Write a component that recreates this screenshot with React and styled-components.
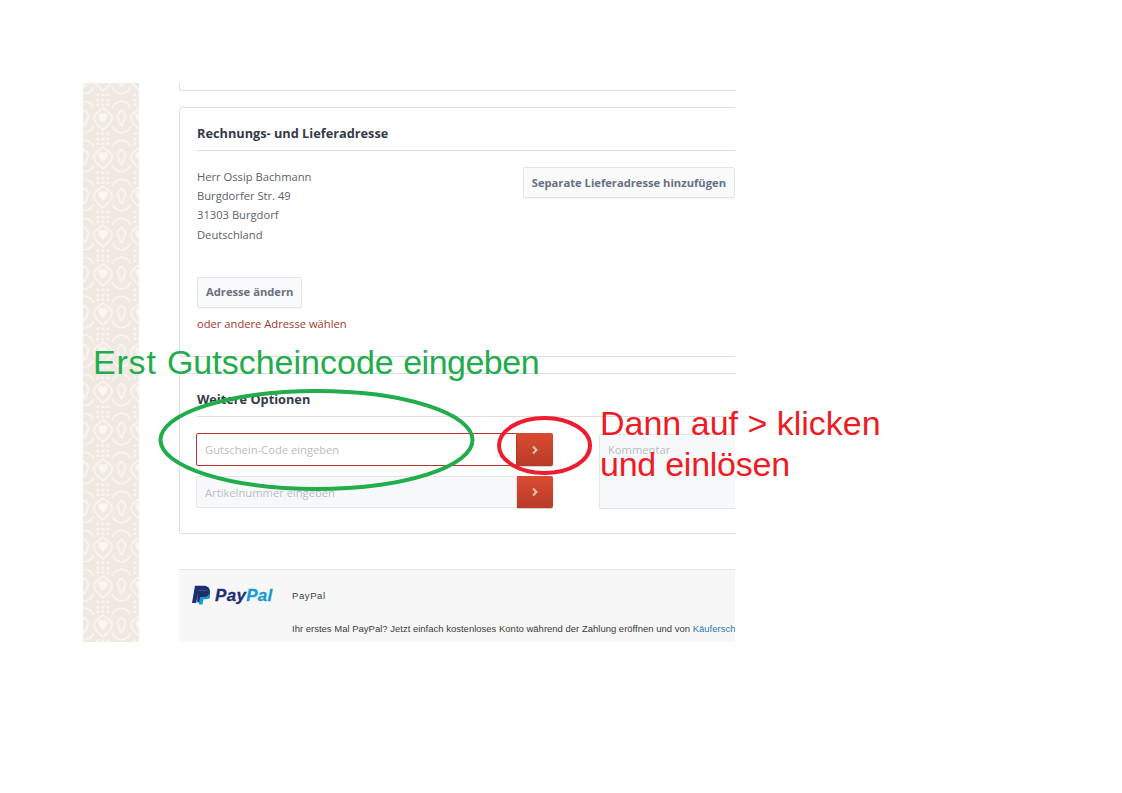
import React from "react";
import styled, { createGlobalStyle } from "styled-components";

const Global = createGlobalStyle`
  html, body { margin: 0; padding: 0; background: #fff; }
  body { font-family: "Open Sans", "Liberation Sans", sans-serif; }
`;

const Page = styled.div`
  position: relative;
  width: 1122px;
  height: 793px;
  padding: 83px 0 0 83px;
  box-sizing: border-box;
  overflow: hidden;
  background: #fff;
`;

const Shot = styled.div`
  display: flex;
  width: 652px;
  height: 559px;
  overflow: hidden;
  background: #fff;
`;

const Stripe = styled.svg`
  flex: 0 0 56px;
  width: 56px;
  height: 559px;
  display: block;
`;

const Main = styled.main`
  flex: 0 0 596px;
  width: 596px;
  padding-left: 40px;
  box-sizing: border-box;
  display: flex;
  flex-direction: column;
  align-items: flex-start;
`;

const CardEnd = styled.div`
  width: 600px;
  height: 8px;
  flex: none;
  border: 1px solid #dcdee0;
  border-top: 0;
  border-radius: 0 0 3px 3px;
  box-sizing: border-box;
`;

const Card = styled.section`
  width: 600px;
  height: ${(p) => p.$h}px;
  margin-top: ${(p) => p.$mt}px;
  flex: none;
  border: 1px solid #dcdee0;
  border-radius: 3px;
  box-sizing: border-box;
  padding: 0 0 0 17px;
`;

const CardTitle = styled.h3`
  margin: 0;
  height: 43px;
  box-sizing: border-box;
  padding-top: 16px;
  width: 560px;
  border-bottom: 1px solid #dcdee0;
  font-size: 12.75px;
  line-height: 18px;
  font-weight: 700;
  color: #343a46;
`;

const AddressRow = styled.div`
  display: flex;
  justify-content: space-between;
  width: 538px;
  padding-top: 16px;
  height: 110px;
  box-sizing: border-box;
`;

const Address = styled.address`
  font-style: normal;
  font-size: 11.2px;
  line-height: 19.2px;
  color: #5b626c;
`;

const GhostButton = styled.button`
  height: 31px;
  padding: 0 8px ${(p) => p.$pb || 1}px;
  margin-top: ${(p) => p.$mt || 0}px;
  box-sizing: border-box;
  background: #f9fafc;
  border: 1px solid #e1e4e8;
  border-radius: 2px;
  box-shadow: 0 1px 1px rgba(0, 0, 0, 0.04);
  font-family: inherit;
  font-size: 11.2px;
  font-weight: 700;
  color: #68717e;
  display: block;
  white-space: nowrap;
`;

const AltLink = styled.a`
  display: block;
  margin-top: 8px;
  font-size: 11.2px;
  line-height: 16px;
  color: #a5372a;
`;

const OptionsGrid = styled.div`
  display: flex;
  gap: 46px;
  padding-top: 16px;
  margin-left: -1px;
  width: 640px;
`;

const CodeColumn = styled.div`
  flex: 0 0 357px;
  display: flex;
  flex-direction: column;
  gap: 10px;
`;

const CodeRow = styled.div`
  display: flex;
  height: ${(p) => p.$h}px;
`;

const CodeInput = styled.div`
  flex: 1;
  box-sizing: border-box;
  padding-left: 8px;
  display: flex;
  align-items: center;
  font-size: 11.2px;
  color: #b9bdc4;
  background: ${(p) => (p.$active ? "#fff" : "#f7f8fa")};
  border: 1px solid ${(p) => (p.$active ? "#b8392b" : "#e1e4e8")};
  border-radius: 2px 0 0 2px;
`;

const GoButton = styled.button`
  flex: 0 0 36px;
  padding: 0;
  border: 0;
  border-radius: 0 2px 2px 0;
  background: linear-gradient(#da4c32, #b83a28);
  box-shadow: 0 1px 1px rgba(0, 0, 0, 0.2);
  display: flex;
  align-items: center;
  justify-content: center;
`;

const Comment = styled.div`
  flex: 0 0 200px;
  height: 75px;
  margin-top: 1px;
  box-sizing: border-box;
  padding: 8px;
  background: #f7f8fa;
  border: 1px solid #e1e4e8;
  border-radius: 2px;
  font-size: 11.2px;
  line-height: 14px;
  color: #b9bdc4;
`;

const Pay = styled.section`
  width: 600px;
  flex: 1;
  margin-top: 35px;
  background: #f7f7f7;
  border-top: 1px solid #e6e6e6;
  box-sizing: border-box;
  display: grid;
  grid-template-columns: 100px 1fr;
  padding-left: 13px;
  font-family: "Liberation Sans", Arial, sans-serif;
  color: #3c3c3c;
`;

const PayLogo = styled.div`
  display: flex;
  align-items: center;
  gap: 5px;
  height: 51px;
`;

const PayWord = styled.span`
  font-size: 17px;
  font-weight: 700;
  font-style: italic;
  letter-spacing: 0.3px;
  color: #1c2f78;
  -webkit-text-stroke: 0.3px currentColor;
`;

const PayWordLight = styled.span`
  color: #179bd7;
`;

const PayCopy = styled.div`
  padding-top: 20px;
`;

const PayName = styled.div`
  font-size: 9.5px;
  letter-spacing: 0.6px;
  line-height: 11px;
`;

const PayNote = styled.div`
  font-size: 9.5px;
  margin-top: 22px;
  line-height: 11px;
  white-space: nowrap;
`;

const PayLink = styled.a`
  color: #2a7aa8;
`;

const Note = styled.div`
  position: absolute;
  left: ${(p) => p.$x}px;
  top: ${(p) => p.$y}px;
  font-family: "Liberation Sans", Arial, sans-serif;
  font-size: 34px;
  line-height: 41px;
  white-space: nowrap;
  color: ${(p) => p.$color};
`;

const NoteSpaced = styled.span`
  letter-spacing: ${(p) => p.$s}px;
`;

const Marks = styled.svg`
  position: absolute;
  left: 0;
  top: 0;
  pointer-events: none;
`;

const Chevron = () => (
  <svg width="8" height="10" viewBox="0 0 8 10" fill="none">
    <path d="M2 1.500 5.500 5 2 8.500" stroke="#f8c9b4" strokeWidth="1.9" />
  </svg>
);

export default function App() {
  return (
    <Page>
      <Global />
      <Shot>
        <Stripe viewBox="0 0 56 559">
          <defs>
            <filter id="soft">
              <feGaussianBlur stdDeviation="0.55" />
            </filter>
            <pattern id="damask" x="1.500" y="15" width="37" height="39" patternUnits="userSpaceOnUse">
              <rect width="37" height="39" fill="#f0e8e2" />
              <g fill="none" stroke="#faf6f2" strokeWidth="1.7">
                <path d="M18.500 10c4 4 9 5 9 10s-5 8-9 12c-4-4-9-7-9-12s5-6 9-10z" />
                <path d="M0 3c5 1 8 3 9 7M37 3c-5 1-8 3-9 7M0 35c5-1 8-3 9-7M37 35c-5-1-8-3-9-7" />
                <path d="M0 12c3 3 5 5 3 9s-1 5-3 7M37 12c-3 3-5 5-3 9s1 5 3 7" />
              </g>
              <path d="M18.500 16c2-2 4.500-1 4.500 2s-3 5-4.500 7c-1.500-2-4.500-4-4.500-7s2.500-4 4.500-2z" fill="#faf6f2" />
              <g fill="#faf6f2">
                <rect x="12" y="1" width="2.500" height="2.500" />
                <rect x="17" y="1" width="2.500" height="2.500" />
                <rect x="22" y="1" width="2.500" height="2.500" />
                <rect x="12" y="5.500" width="2.500" height="2.500" />
                <rect x="17" y="5.500" width="2.500" height="2.500" />
                <rect x="22" y="5.500" width="2.500" height="2.500" />
                <rect x="12" y="34.500" width="2.500" height="2.500" />
                <rect x="17" y="34.500" width="2.500" height="2.500" />
                <rect x="22" y="34.500" width="2.500" height="2.500" />
              </g>
            </pattern>
          </defs>
          <rect width="56" height="559" fill="url(#damask)" filter="url(#soft)" />
        </Stripe>
        <Main>
          <CardEnd />
          <Card $h={250} $mt={16}>
            <CardTitle>Rechnungs- und Lieferadresse</CardTitle>
            <AddressRow>
              <Address>
                Herr Ossip Bachmann
                <br />
                Burgdorfer Str. 49
                <br />
                31303 Burgdorf
                <br />
                Deutschland
              </Address>
              <GhostButton>Separate Lieferadresse hinzufügen</GhostButton>
            </AddressRow>
            <GhostButton $mt={16} $pb={3}>Adresse ändern</GhostButton>
            <AltLink>oder andere Adresse wählen</AltLink>
          </Card>
          <Card $h={161} $mt={16}>
            <CardTitle>Weitere Optionen</CardTitle>
            <OptionsGrid>
              <CodeColumn>
                <CodeRow $h={33}>
                  <CodeInput $active>Gutschein-Code eingeben</CodeInput>
                  <GoButton>
                    <Chevron />
                  </GoButton>
                </CodeRow>
                <CodeRow $h={32}>
                  <CodeInput>Artikelnummer eingeben</CodeInput>
                  <GoButton>
                    <Chevron />
                  </GoButton>
                </CodeRow>
              </CodeColumn>
              <Comment>Kommentar</Comment>
            </OptionsGrid>
          </Card>
          <Pay>
            <PayLogo>
              <svg width="18" height="21" viewBox="0 0 24 28">
                <path fill="#179bd7" d="M9 26h5l1.200-7h3.600c5 0 8-3 8.200-8 .1-2-1-3.500-2.500-4.500L10 9z" />
                <path fill="#222d65" d="M7 7h11c3 0 5 .8 6 2.500-.8 4-4 6.500-8 6.500h-5l-1.500 7H7z" />
                <path fill="#1c2f78" d="M4 1h11c5 0 9 2 8.500 7-.1.600-.2 1-.4 1.500-1-1.700-3-2.500-6-2.500H8.500l-2.800 17H0z" />
              </svg>
              <PayWord>
                Pay<PayWordLight>Pal</PayWordLight>
              </PayWord>
            </PayLogo>
            <PayCopy>
              <PayName>PayPal</PayName>
              <PayNote>
                Ihr erstes Mal PayPal? Jetzt einfach kostenloses Konto während der Zahlung eröffnen und von{" "}
                <PayLink>Käuferschutz profitieren</PayLink>
              </PayNote>
            </PayCopy>
          </Pay>
        </Main>
      </Shot>
      <Marks width="1122" height="793" viewBox="0 0 1122 793" fill="none">
        <ellipse cx="316.500" cy="440" rx="156" ry="49" stroke="#22ac4c" strokeWidth="4" />
        <ellipse cx="544.500" cy="445.500" rx="45.500" ry="27.500" stroke="#ed1c2e" strokeWidth="4" />
      </Marks>
      <Note $x={93} $y={342} $color="#22ac4c">
        <NoteSpaced $s={0.8}>Erst </NoteSpaced>Gutscheincode <NoteSpaced $s={-0.5}>eingeben</NoteSpaced>
      </Note>
      <Note $x={600} $y={403} $color="#ed1c24">
        Dann auf &gt; klicken
        <br />
        <NoteSpaced $s={-0.25}>und einlösen</NoteSpaced>
      </Note>
    </Page>
  );
}
